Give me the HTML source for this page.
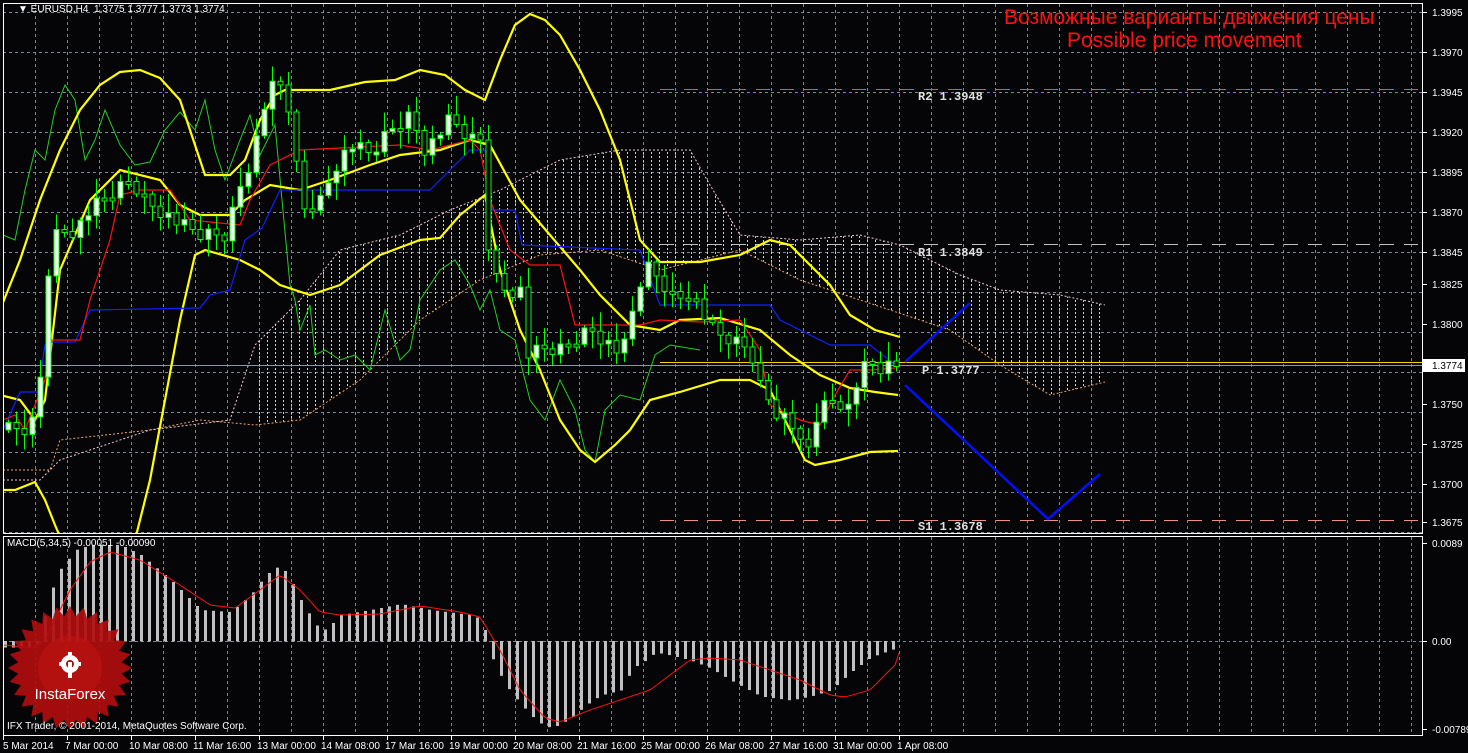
<!DOCTYPE html>
<html><head><meta charset="utf-8"><style>
html,body{margin:0;padding:0;background:#050508;}
body{width:1468px;height:753px;overflow:hidden;position:relative;font-family:"Liberation Sans",sans-serif;}
svg{position:absolute;left:0;top:0;}
.t{position:absolute;color:#fff;font-size:10px;white-space:nowrap;}
</style></head><body>
<svg id="s" width="1468" height="753" xmlns="http://www.w3.org/2000/svg">
<defs>
<pattern id="cl" width="8" height="4" patternUnits="userSpaceOnUse"><rect x="3" y="0" width="1" height="2" fill="#f0c8b0"/></pattern>
<clipPath id="mainc"><rect x="3" y="3" width="1419" height="530"/></clipPath>
<clipPath id="macc"><rect x="3" y="537" width="1419" height="198"/></clipPath>
</defs>
<g id="grid"></g>
<g id="main" clip-path="url(#mainc)"></g>
<g id="mac" clip-path="url(#macc)"></g>
<g id="frame" fill="none" stroke="#fff" stroke-width="1">
<rect x="3.5" y="3.5" width="1419" height="530"/>
<line x1="3" y1="536.5" x2="1423" y2="536.5"/>
<line x1="3.5" y1="536" x2="3.5" y2="736"/>
<line x1="1422.5" y1="536" x2="1422.5" y2="736"/>
<line x1="3" y1="735.5" x2="1423" y2="735.5"/>
</g>
<g id="lbl" font-family="Liberation Sans, sans-serif" font-size="10" fill="#fff"></g>
<!-- logo -->
<g transform="translate(70,668)">
<polygon id="star" fill="#b00d0d" opacity="0.92"/>
<circle r="32" fill="#c41414" opacity="0.5"/>
<g fill="#fff">
<circle cx="0" cy="-4" r="9"/>
<circle cx="0" cy="-4" r="4" fill="#b00d0d"/>
<rect x="-2" y="-6" width="4" height="16" fill="#fff"/>
<rect x="-2" y="-16" width="4" height="5"/><rect x="-11" y="-6" width="5" height="4"/><rect x="6" y="-6" width="5" height="4"/>
</g>
<text x="0" y="31" text-anchor="middle" fill="#fff" font-size="15" font-family="Liberation Sans, sans-serif">InstaForex</text>
</g>
</svg>
<div class="t" style="left:18px;top:4px;">&#9660; EURUSD,H4 &nbsp;1.3775 1.3777 1.3773 1.3774</div>
<div class="t" style="left:1004px;top:6px;font-size:21px;color:#ff1010;">Возможные варианты движения цены</div>
<div class="t" style="left:1067px;top:29px;font-size:21px;color:#ff1010;">Possible price movement</div>
<div class="t" style="left:7px;top:538px;">MACD(5,34,5) -0.00051 -0.00090</div>
<div class="t" style="left:7px;top:721px;">IFX Trader, © 2001-2014, MetaQuotes Software Corp.</div>
<script>
(function(){
var NS="http://www.w3.org/2000/svg";
function el(p,tg,a){var e=document.createElementNS(NS,tg);for(var k in a)e.setAttribute(k,a[k]);document.getElementById(p).appendChild(e);return e;}
function interp(pts,x){if(x<=pts[0][0])return pts[0][1];for(var i=1;i<pts.length;i++){if(x<=pts[i][0]){var a=pts[i-1],b=pts[i];return a[1]+(b[1]-a[1])*(x-a[0])/(b[0]-a[0]);}}return pts[pts.length-1][1];}
function pl(p,pts,c,w,extra){var a={points:pts.map(function(q){return q.join(',')}).join(' '),fill:'none',stroke:c,'stroke-width':w};for(var k in extra)a[k]=extra[k];return el(p,'polyline',a);}
for(var k=0;k<14;k++){var y=12+40*k+.5;el('grid','line',{x1:3,y1:y,x2:1422,y2:y,stroke:'#778899','stroke-dasharray':'3,3'});}
var pls=[[12,"1.3995"],[52,"1.3970"],[92,"1.3945"],[132,"1.3920"],[172,"1.3895"],[212,"1.3870"],[252,"1.3845"],[284,"1.3825"],[324,"1.3800"],[404,"1.3750"],[444,"1.3725"],[484,"1.3700"],[522,"1.3675"]];
pls.forEach(function(a){el('lbl','line',{x1:1422,y1:a[0]+.5,x2:1427,y2:a[0]+.5,stroke:'#fff'});var tx=el('lbl','text',{x:1432,y:a[0]+4});tx.textContent=a[1];});
for(var x=35;x<1422;x+=32){el('grid','line',{x1:x+.5,y1:4,x2:x+.5,y2:533,stroke:'#778899','stroke-dasharray':'3,3'});el('grid','line',{x1:x+.5,y1:537,x2:x+.5,y2:735,stroke:'#778899','stroke-dasharray':'3,3'});}
el('grid','line',{x1:3,y1:641.5,x2:1422,y2:641.5,stroke:'#778899','stroke-dasharray':'3,3'});
var tl=["5 Mar 2014","7 Mar 00:00","10 Mar 08:00","11 Mar 16:00","13 Mar 00:00","14 Mar 08:00","17 Mar 16:00","19 Mar 00:00","20 Mar 08:00","21 Mar 16:00","25 Mar 00:00","26 Mar 08:00","27 Mar 16:00","31 Mar 00:00","1 Apr 08:00"];
for(var i=0;i<tl.length;i++){var xx=3+64*i;el('lbl','line',{x1:xx+.5,y1:736,x2:xx+.5,y2:740,stroke:'#fff'});var tx=el('lbl','text',{x:i==0?3:xx-2,y:749});tx.textContent=tl[i];}
[[543,"0.0089"],[641,"0.00"],[729,"-0.00789"]].forEach(function(a){el('lbl','line',{x1:1422,y1:a[0]+.5,x2:1427,y2:a[0]+.5,stroke:'#fff'});var tx=el('lbl','text',{x:1432,y:a[0]+4});tx.textContent=a[1];});
el('lbl','rect',{x:1423,y:359,width:42,height:13,fill:'#fff'});var tx=el('lbl','text',{x:1432,y:369,fill:'#000'});tx.textContent="1.3774";
var ctop=[[255,345],[300,300],[340,250],[400,235],[450,210],[500,190],[560,160],[620,150],[690,150],[710,185],[740,235],[800,240],[860,235],[900,245],[960,275],[1000,290],[1060,295],[1105,305]];
var cbot=[[255,425],[300,420],[360,380],[420,320],[480,280],[540,255],[600,250],[660,270],[740,250],[800,280],[860,300],[950,330],[1000,365],[1050,395],[1105,382]];
el('main','polygon',{points:ctop.concat(cbot.slice().reverse()).map(function(q){return q.join(',')}).join(' '),fill:'url(#cl)'});
pl('main',[[3,470],[50,470],[60,440],[150,430],[200,420],[255,425]].concat(cbot.slice(1)),'#f0a060',1,{'stroke-dasharray':'2,2'});
pl('main',[[3,480],[40,480],[60,460],[150,430],[230,420],[255,345]].concat(ctop.slice(1)),'#f0c8d0',1,{'stroke-dasharray':'2,2'});
el('main','line',{x1:660,y1:89.5,x2:1422,y2:89.5,stroke:'#ff5020','stroke-dasharray':'14,10'});
el('main','line',{x1:660,y1:244.5,x2:1422,y2:244.5,stroke:'#c0c0c0','stroke-dasharray':'14,10'});
el('main','line',{x1:660,y1:520.5,x2:1422,y2:520.5,stroke:'#f09080','stroke-dasharray':'14,10'});
el('main','line',{x1:660,y1:362.5,x2:1422,y2:362.5,stroke:'#ffd000'});
el('main','line',{x1:3,y1:365.5,x2:1422,y2:365.5,stroke:'#8898a8'});
[[918,100,"R2 1.3948"],[918,256,"R1 1.3849"],[922,374,"P  1.3777"],[918,530,"S1 1.3678"]].forEach(function(a){var tt=el('main','text',{x:a[0],y:a[1],fill:'#e0e0e0','font-family':'Liberation Mono, monospace','font-size':'12','font-weight':'bold'});tt.textContent=a[2];});
pl('main',[[3,235],[15,240],[25,190],[35,150],[45,160],[55,110],[65,85],[75,100],[85,160],[95,140],[105,110],[120,145],[135,165],[150,162],[165,130],[180,112],[195,130],[205,100],[215,150],[225,180],[240,140],[250,115],[260,155],[275,125],[282,200],[290,285],[295,300],[300,330],[310,305],[315,355],[325,350],[340,360],[355,355],[370,370],[385,310],[400,360],[410,350],[420,300],[440,270],[455,260],[470,285],[480,310],[490,290],[500,330],[515,340],[530,400],[545,420],[560,380],[575,410],[585,450],[595,462],[605,410],[620,395],[640,400],[655,355],[670,345],[700,350]],'#20d020',1);
pl('main',[[0,310],[20,260],[40,200],[60,150],[80,110],[100,85],[120,72],[140,70],[160,78],[180,100],[195,145],[205,175],[230,175],[245,160],[260,120],[275,95],[285,90],[330,90],[365,82],[395,80],[420,70],[445,75],[465,90],[485,100],[500,60],[515,25],[530,14],[545,20],[560,35],[580,70],[600,110],[620,160],[640,240],[660,262],[700,262],[740,255],[770,240],[790,245],[810,265],[830,285],[850,315],[875,330],[900,337]],'#ffff00',2.2);
pl('main',[[0,395],[20,400],[35,420],[45,400],[60,270],[90,200],[120,170],[160,180],[180,205],[200,215],[230,215],[245,200],[270,185],[300,190],[330,180],[370,165],[400,155],[440,150],[470,140],[490,145],[520,200],[550,235],[580,270],[600,295],[630,325],[660,330],[680,320],[720,318],[760,330],[790,355],[820,375],[850,388],[875,392],[898,395]],'#ffff00',2.2);
pl('main',[[0,490],[15,490],[35,482],[45,500],[55,525],[70,560],[120,560],[135,540],[150,480],[165,400],[180,320],[195,255],[205,250],[240,260],[260,270],[280,285],[310,295],[340,285],[380,255],[420,240],[440,238],[460,215],[485,195],[500,270],[520,330],[540,370],[560,420],[580,450],[595,462],[615,445],[630,430],[650,400],[680,392],[720,380],[750,380],[770,390],[790,430],[805,460],[815,465],[840,460],[870,452],[898,451]],'#ffff00',2.2);
pl('main',[[3,430],[20,392],[38,392],[45,345],[50,342],[75,342],[90,310],[200,308],[210,295],[230,290],[245,240],[262,228],[280,190],[430,190],[470,150],[485,150],[492,210],[515,210],[522,245],[640,250],[660,305],[770,305],[780,320],[800,330],[830,345],[870,345],[895,365]],'#1020ff',1.2);
pl('main',[[3,420],[15,415],[25,430],[45,380],[50,340],[80,340],[90,300],[110,240],[120,195],[140,190],[170,190],[190,220],[240,225],[250,200],[270,165],[300,150],[400,145],[430,150],[470,140],[480,150],[490,200],[510,250],[530,265],[560,265],[575,325],[640,325],[660,320],[700,322],[740,320],[760,350],[770,405],[800,420],[820,425],[835,395],[850,370],[870,370],[895,368]],'#ff1010',1.2);
var cp=[[8,430],[25,430],[35,420],[42,360],[50,240],[60,230],[75,230],[90,210],[110,195],[130,180],[145,200],[160,210],[180,225],[200,235],[225,235],[240,185],[252,155],[268,90],[285,85],[295,160],[302,210],[320,200],[335,165],[350,145],[370,155],[390,130],[410,115],[425,150],[450,120],[470,140],[480,140],[490,270],[505,290],[520,290],[528,355],[545,350],[560,350],[590,328],[610,345],[622,355],[635,300],[645,265],[660,280],[675,300],[690,290],[700,310],[715,335],[730,340],[750,350],[760,385],[775,410],[790,420],[805,460],[818,410],[835,400],[850,410],[865,350],[875,372],[890,368],[898,368]];
var prev=interp(cp,0);
for(var i=0;i<112;i++){var x=8+8*i;if(x>898)break;var c=interp(cp,x)+((i*37)%11-5)*1.5;var o=prev;prev=c;
var bt=Math.min(o,c),bb=Math.max(o,c);if(bb-bt<3){bb=bt+3;}
var hi=bt-3-((i*13)%9)*2,lo=bb+3+((i*7)%8)*2;
el('main','line',{x1:x+.5,y1:hi,x2:x+.5,y2:lo,stroke:'#00ff00'});
el('main','rect',{x:x-2,y:bt,width:5,height:bb-bt,fill:c<o?'#fff':'#000',stroke:'#00ff00','stroke-width':1});}
pl('main',[[905,362],[970,303]],'#0010ff',2.5);
pl('main',[[905,385],[1048,519],[1100,474]],'#0010ff',2.5);
var mh=[[3,647],[35,647],[43,620],[51,590],[59,570],[75,550],[90,545],[120,545],[140,555],[170,580],[200,610],[230,612],[250,595],[265,575],[280,565],[290,580],[300,600],[315,625],[325,630],[340,615],[370,610],[400,604],[430,610],[470,615],[482,620],[488,650],[498,672],[510,692],[530,715],[545,727],[555,726],[570,718],[585,705],[600,695],[620,690],[632,668],[645,660],[655,652],[670,655],[690,660],[710,668],[730,680],[760,696],[790,700],[810,696],[830,690],[850,672],[870,657],[895,648]];
var ms=[[3,645],[35,648],[45,640],[70,590],[90,562],[110,552],[140,560],[180,585],[210,605],[235,608],[260,590],[280,575],[300,590],[320,612],[340,615],[380,614],[420,606],[460,612],[480,617],[500,650],[520,690],[545,718],[560,722],[590,710],[620,700],[650,690],[690,660],[710,658],[740,660],[770,670],[800,680],[830,695],[845,697],[870,690],[895,665],[900,650]];
for(var i=0;i<112;i++){var x=4+8*i;if(x>900)break;var v=interp(mh,x);el('mac','rect',{x:x,y:Math.min(v,641),width:3,height:Math.abs(v-641)+0.5,fill:'#c0c0c0'});}
var sp=[];for(var x=3;x<=900;x+=4)sp.push([x,interp(ms,x)]);pl('mac',sp,'#ff1010',1);
var s=[];for(var i=0;i<56;i++){var r=i%2?52:62,a=i*Math.PI/28;s.push((r*Math.cos(a)).toFixed(1)+','+(r*Math.sin(a)).toFixed(1));}
document.getElementById('star').setAttribute('points',s.join(' '));
})();
</script>
</body></html>
